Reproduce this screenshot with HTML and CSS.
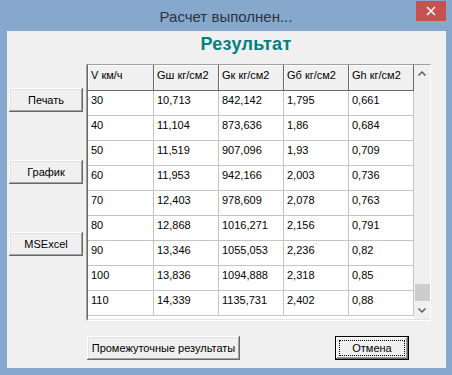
FILE: index.html
```html
<!DOCTYPE html>
<html lang="ru">
<head>
    <meta charset="UTF-8">
    <title>Расчет выполнен...</title>
    <link rel="stylesheet" href="styles.css">
</head>
<body>

<div class="window">
    <div class="titlebar">
        <span class="caption">Расчет выполнен...</span>
        <div class="close">
            <svg width="10" height="10" viewBox="0 0 10 10"><path d="M1 1L9 9M9 1L1 9" stroke="#fff" stroke-width="1.6"/></svg>
        </div>
    </div>

    <div class="client">
        <h1 class="heading">Результат</h1>

        <div class="main">
            <div class="side">
                <button class="btn">Печать</button>
                <button class="btn">График</button>
                <button class="btn">MSExcel</button>
            </div>

            <div class="grid">
                <div class="grid-inner">
                    <div class="cells">
                        <div class="hcell">V км/ч</div>
                        <div class="hcell">Gш кг/см2</div>
                        <div class="hcell">Gк кг/см2</div>
                        <div class="hcell">Gб кг/см2</div>
                        <div class="hcell">Gh кг/см2</div>

                        <div class="cell">30</div><div class="cell">10,713</div><div class="cell">842,142</div><div class="cell">1,795</div><div class="cell">0,661</div>
                        <div class="cell">40</div><div class="cell">11,104</div><div class="cell">873,636</div><div class="cell">1,86</div><div class="cell">0,684</div>
                        <div class="cell">50</div><div class="cell">11,519</div><div class="cell">907,096</div><div class="cell">1,93</div><div class="cell">0,709</div>
                        <div class="cell">60</div><div class="cell">11,953</div><div class="cell">942,166</div><div class="cell">2,003</div><div class="cell">0,736</div>
                        <div class="cell">70</div><div class="cell">12,403</div><div class="cell">978,609</div><div class="cell">2,078</div><div class="cell">0,763</div>
                        <div class="cell">80</div><div class="cell">12,868</div><div class="cell">1016,271</div><div class="cell">2,156</div><div class="cell">0,791</div>
                        <div class="cell">90</div><div class="cell">13,346</div><div class="cell">1055,053</div><div class="cell">2,236</div><div class="cell">0,82</div>
                        <div class="cell">100</div><div class="cell">13,836</div><div class="cell">1094,888</div><div class="cell">2,318</div><div class="cell">0,85</div>
                        <div class="cell">110</div><div class="cell">14,339</div><div class="cell">1135,731</div><div class="cell">2,402</div><div class="cell">0,88</div>
                    </div>
                    <div class="scrollbar">
                        <div class="arrow">
                            <svg width="8" height="5" viewBox="0 0 8 5"><path d="M0.5 4.5L4 1L7.5 4.5" fill="none" stroke="#606060" stroke-width="1.5"/></svg>
                        </div>
                        <div class="track"><div class="thumb"></div></div>
                        <div class="arrow">
                            <svg width="8" height="5" viewBox="0 0 8 5"><path d="M0.5 0.5L4 4L7.5 0.5" fill="none" stroke="#606060" stroke-width="1.5"/></svg>
                        </div>
                    </div>
                </div>
            </div>
        </div>

        <div class="footer">
            <button class="btn wide">Промежуточные результаты</button>
            <button class="btn default">Отмена</button>
        </div>
    </div>
</div>

</body>
</html>
```

FILE: styles.css
```css
body {
    margin: 0;
    background: #86a8cc;
    font-family: "Liberation Sans", Arial, sans-serif;
}
.window {
    width: 452px;
    height: 375px;
}
.titlebar {
    height: 31px;
    display: flex;
    align-items: flex-start;
    justify-content: center;
    position: relative;
}
.caption {
    margin-top: 7px;
    font-size: 15px;
    line-height: 20px;
    color: #2b3340;
}
.close {
    position: absolute;
    right: 6px;
    top: 1px;
    width: 30px;
    height: 20px;
    background: #c75050;
    display: flex;
    align-items: center;
    justify-content: center;
}
.client {
    margin: 0 6px 0 7px;
    height: 337px;
    background: #f0f0f0;
    box-sizing: border-box;
}
.heading {
    margin: 0;
    height: 33px;
    line-height: 26px;
    padding-left: 39px;
    text-align: center;
    font-size: 18px;
    font-weight: bold;
    color: #008080;
    letter-spacing: 0.3px;
}
.main {
    display: flex;
    gap: 3px;
    padding-left: 2px;
}
.side {
    width: 74px;
    display: flex;
    flex-direction: column;
    gap: 48px;
    padding-top: 24px;
}
.btn {
    height: 24px;
    padding: 0;
    border: none;
    background: #f0f0f0;
    font-family: "Liberation Sans", Arial, sans-serif;
    font-size: 11px;
    color: #000;
    box-shadow: inset -1px -1px #696969, inset 1px 1px #fff, inset -2px -2px #a0a0a0, inset 2px 2px #e3e3e3;
}
.side .btn {
    width: 74px;
}
.grid {
    border-top: 1px solid #a0a0a0;
    border-left: 1px solid #a0a0a0;
    border-right: 1px solid #fff;
    border-bottom: 1px solid #fff;
}
.grid-inner {
    display: flex;
    border-left: 1px solid #696969;
    border-bottom: 1px solid #e3e3e3;
    height: 254px;
    background: #fff;
}
.cells {
    width: 326px;
    height: 254px;
    overflow: hidden;
    display: grid;
    grid-template-columns: 66px 65px 65px 65px 65px;
    grid-template-rows: 26px;
    grid-auto-rows: 25px;
    font-size: 11px;
    line-height: 13px;
}
.hcell {
    background: #f0f0f0;
    border-right: 1px solid #696969;
    border-bottom: 1px solid #696969;
    box-shadow: inset 1px 1px #fff;
    padding: 4px 0 0 3px;
    white-space: nowrap;
}
.cell {
    border-right: 1px solid #c4c4c4;
    border-bottom: 1px solid #c4c4c4;
    padding: 3px 0 0 3px;
    white-space: nowrap;
}
.scrollbar {
    width: 16px;
    background: #f0f0f0;
    display: flex;
    flex-direction: column;
}
.arrow {
    height: 17px;
    display: flex;
    align-items: center;
    justify-content: center;
}
.track {
    flex: 1;
    display: flex;
    flex-direction: column;
    justify-content: flex-end;
}
.thumb {
    height: 17px;
    margin: 0 0 1px 1px;
    background: #cdcdcd;
}
.footer {
    display: flex;
    gap: 95px;
    padding: 15px 0 0 80px;
}
.btn.wide {
    width: 153px;
}
.btn.default {
    width: 74px;
    box-shadow: inset 0 0 0 1px #000, inset -2px -2px #696969, inset 2px 2px #fff, inset -3px -3px #a0a0a0;
    outline: 1px dotted #000;
    outline-offset: -5px;
}
```
